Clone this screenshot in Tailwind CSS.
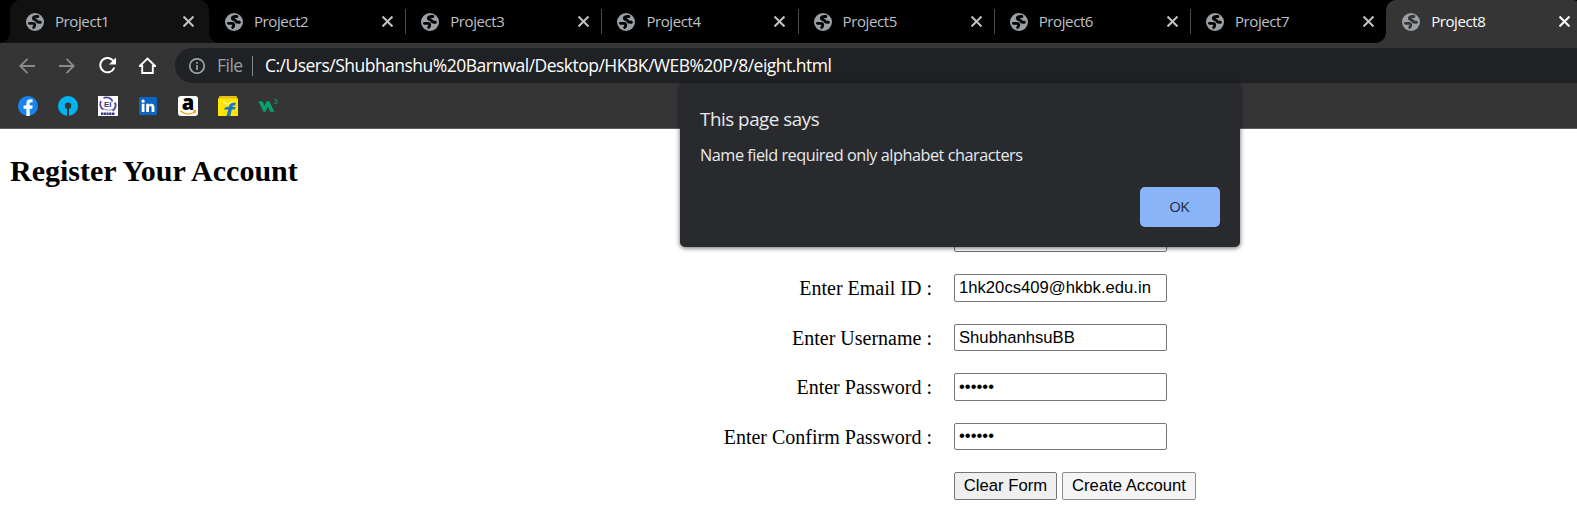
<!DOCTYPE html>
<html lang="en">
<head>
<meta charset="utf-8">
<title>Project8</title>
<script src="https://cdn.jsdelivr.net/npm/@tailwindcss/browser@4"></script>
</head>
<body class="h-[512px] w-[1577px] overflow-hidden bg-white">
<svg class="hidden">
  <symbol id="globe" viewBox="0 0 18 18">
    <circle cx="9" cy="9" r="9" fill="#9ba0a5"/>
    <g fill="none" stroke="var(--tab)" stroke-linecap="round" stroke-linejoin="round">
      <path stroke-width="3" d="M11.800 3.600C9 3.200 7 4.300 7.400 5.600 7.900 7 10.600 6.300 10.900 8.300 11.500 9.500 13 9 14.300 9.200"/>
      <path stroke-width="2.800" d="M3.400 10.300H6.800C8.300 10.300 9 11.300 8.700 12.600 8.500 13.600 8 14 7.600 14.500"/>
    </g>
  </symbol>
  <symbol id="x" viewBox="0 0 10 10"><path d="M.5.5l9 9M9.500.5L.5 9.500" stroke="currentColor" stroke-width="1.900" fill="none"/></symbol>
</svg>
<div class="relative flex h-[512px] flex-col">
  <header class="h-[129px] shrink-0 border-b border-[#5e5e5e] bg-[#353535] font-['Open_Sans',sans-serif]">
    <nav id="tabs" class="flex h-[43px] overflow-hidden bg-black pl-[10px] text-[15px] tracking-[-0.400px] text-[#bfc1c4]"></nav>
    <div class="flex h-10 items-end">
      <div class="flex h-[35px] w-[175px] shrink-0 items-center gap-6 pl-[19px] text-white">
        <svg class="size-4" viewBox="0 0 16 16" fill="none" stroke="#8b8b8b" stroke-width="1.800"><path d="M16 8H1.500M8.500 .8L1.300 8l7.200 7.200"/></svg>
        <svg class="size-4" viewBox="0 0 16 16" fill="none" stroke="#8b8b8b" stroke-width="1.800"><path d="M0 8h14.500M7.500 .8L14.700 8l-7.200 7.200"/></svg>
        <svg class="h-[17px] w-[17px]" viewBox="0 0 17 17" fill="none"><path d="M14.600 4.300A7.200 7.200 0 1 0 15.300 10.500" stroke="#fff" stroke-width="2"/><path d="M17 .5v7h-7z" fill="#fff"/></svg>
        <svg class="-ml-px h-[17px] w-[17px]" viewBox="0 0 17 17" fill="none" stroke="#fff" stroke-width="1.900"><path d="M.8 9L8.500 1.500 16.200 9H13.800v7H3.200V9z"/></svg>
      </div>
      <div class="flex h-[35px] flex-1 items-center rounded-l-full bg-[#202124] pl-[14px] text-[17.500px]">
        <svg class="size-4" viewBox="0 0 16 16" fill="none" stroke="#9aa0a6" stroke-width="1.700"><circle cx="8" cy="8" r="7.200"/><path d="M8 7v5M8 4v1.800"/></svg>
        <span class="ml-3 w-[27px] whitespace-nowrap tracking-[-0.500px] text-[#9aa0a6]">File</span>
        <span class="ml-2 h-5 w-px bg-[#85888c]"></span>
        <span class="ml-3 whitespace-nowrap tracking-[-0.520px] text-white">C:/Users/Shubhanshu%20Barnwal/Desktop/HKBK/WEB%20P/8/eight.html</span>
      </div>
    </div>
    <div class="flex h-[45px] items-center gap-5 pl-[18px]">
      <svg class="size-5" viewBox="0 0 20 20"><circle cx="10" cy="10" r="10" fill="#1686ed"/><path fill="#fff" d="M8.400 20v-7.200H5.600V9.600h2.800V7.600c0-2.900 1.500-4.400 4.100-4.400l2.100.2v2.800h-1.200c-1.200 0-1.700.7-1.700 1.500v1.900h3l-.5 3.200h-2.500V20z"/></svg>
      <svg class="size-5" viewBox="0 0 20 20"><circle cx="10" cy="10" r="10" fill="#00b5ef"/><circle cx="10" cy="9.800" r="3.200" fill="#353535"/><path d="M9 10h2v10H9z" fill="#353535"/></svg>
      <svg class="size-5" viewBox="0 0 20 20"><path fill="#fff" d="M0 0h20v20H0z"/><g fill="none" stroke="#4b4aa0" stroke-width="1.800"><path d="M5.500 1.900C10 .5 13.500 2.500 14.500 5.500M16.800 6.500c1.700 3.500.2 6.500-2.300 8.200M3 5C1.500 8.500 2.500 12 5.500 13.500"/></g><path d="M6 13c3 1.500 6 1.500 9 .2" stroke="#8b8ac6" fill="none"/><path d="M3 17.700h14" stroke="#37358f" stroke-width="2.600" stroke-dasharray="2.200 .5"/><text x="6" y="11" font-family="Liberation Sans" font-weight="700" font-size="8" fill="#37358f">EI</text></svg>
      <svg class="size-5" viewBox="0 0 20 20"><rect x="1" y="1" width="18" height="18" rx="1.500" fill="#0a66c2"/><g fill="#fff"><circle cx="5.100" cy="5.200" r="1.600"/><path d="M3.700 7.800h2.800V16H3.700zM8.200 7.800h2.700V9c1.300-2.200 5.500-1.900 5.500 2.200V16h-2.800v-4.300c0-2.200-2.600-2-2.600 0V16H8.200z"/></g></svg>
      <svg class="size-5 overflow-visible" viewBox="0 0 20 20"><rect width="20" height="20" rx="3" fill="#fff"/><text x="3.800" y="13.500" font-family="Open Sans" font-weight="800" font-size="21" fill="#000" textLength="12.500" lengthAdjust="spacingAndGlyphs">a</text><path d="M2.500 15c4.500 3.500 10 3.700 14.300 1M15 14.900l2.500-.1-.6 2.400" fill="none" stroke="#f90" stroke-width="1.200"/></svg>
      <svg class="size-5" viewBox="0 0 20 20"><path fill="#e9bd17" d="M1.500 0h17L20 4H0z"/><path fill="#ffe500" d="M0 2.500h20V20H0z"/><path d="M5.500 5c1.200 4 7.500 4 9 0" stroke="#fff6a0" stroke-width="1.200" fill="none"/><path fill="#1f74c8" d="M17.800 7c-4.600-.8-6.500 1-7 4H8L5.500 13.400h4.700L8.500 20h3.800l1.500-6.600h3l.9-2.400h-3.300c.3-1.600 1.300-1.700 2.800-1.500z"/></svg>
      <svg class="size-5" viewBox="0 0 20 20"><path d="M.3 5.200h4.200l2.300 4.600L8.600 5.200h2.600l5.200 10.500h-4.200L9.800 10.500 7.600 15.700H5.500z" fill="#0aa06e"/><text x="15.600" y="8" font-family="Liberation Sans" font-size="8" fill="#0aa06e">3</text></svg>
    </div>
  </header>
  <main class="flex-1 bg-white font-['Liberation_Serif',serif] text-black">
    <h1 class="h-[85px] pt-[25px] pl-[10px] text-[30px] leading-[34px] font-bold">Register Your Account</h1>
    <form class="grid auto-rows-[49.500px] grid-cols-[932px_1fr] items-center gap-x-[22px] text-[20px]">
      <label class="text-right">Enter Name :</label><input class="mb-0.5 h-7 w-[213px] rounded-[2px] border border-[#767676] px-1 font-['Liberation_Sans',sans-serif] text-[16.670px]" value="">
      <label class="pb-px text-right">Enter Email ID :</label><input class="h-7 w-[213px] rounded-[2px] border border-[#767676] px-1 font-['Liberation_Sans',sans-serif] text-[16.670px]" value="1hk20cs409@hkbk.edu.in">
      <label class="text-right">Enter Username :</label><input class="h-[27px] w-[213px] rounded-[2px] border border-[#767676] px-1 font-['Liberation_Sans',sans-serif] text-[16.670px]" value="ShubhanhsuBB">
      <label class="text-right">Enter Password :</label><input type="password" class="h-7 w-[213px] rounded-[2px] border border-[#767676] px-1 pb-px font-['Liberation_Sans',sans-serif] text-[16.670px]" value="abcdef">
      <label class="text-right">Enter Confirm Password :</label><input type="password" class="h-[27px] w-[213px] rounded-[2px] border border-[#767676] px-1 pb-px font-['Liberation_Sans',sans-serif] text-[16.670px]" value="abcdef">
      <span></span>
      <div class="flex gap-[5px] font-['Liberation_Sans',sans-serif] text-[16.670px]">
        <button type="button" class="h-7 w-[103px] rounded-[2px] border border-[#767676] bg-[#efefef] pt-px leading-none">Clear Form</button>
        <button type="button" class="h-7 w-[134px] rounded-[2px] border border-[#8c8c8c] bg-[#f5f5f5] pt-px leading-none">Create Account</button>
      </div>
    </form>
  </main>
  <div role="dialog" class="absolute top-[83px] left-[680px] flex h-[164px] w-[560px] flex-col rounded-[5px] bg-[#292a2d] px-5 pt-[23px] pb-5 font-['Open_Sans',sans-serif] text-[#e8eaed] shadow-[0_1px_5px_rgba(0,0,0,0.6)]">
    <h2 class="text-[18.750px] leading-[26px] tracking-[-0.450px]">This page says</h2>
    <p class="mt-[11px] text-[16.250px] leading-[24px] tracking-[-0.470px]">Name field required only alphabet characters</p>
    <button type="button" class="mt-auto ml-auto h-10 w-20 rounded-[5px] bg-[#8ab4f8] pr-0.5 pb-0.5 text-[15px] font-medium tracking-[-0.700px] text-[#202b3c]">OK</button>
  </div>
</div>
<script>
const tabs = document.getElementById('tabs');
for (let i = 1; i <= 8; i++) {
  const t = document.createElement('div');
  let c = 'relative flex shrink-0 items-center pl-4 w-[196.200px] ';
  let color = '#000';
  if (i === 1) { c += 'rounded-t-[10px] bg-[#111111]'; color = '#111'; }
  else if (i === 8) { c += 'rounded-t-[10px] bg-[#353535] text-white'; color = '#353535'; }
  t.className = c;
  if (i === 1) t.style.width = '199px';
  t.style.setProperty('--tab', color);
  const curve = 'h-[10px] w-[10px] absolute bottom-0 ';
  t.innerHTML =
    (i === 1 ? `<i class="${curve} -left-[10px] bg-[radial-gradient(circle_at_0_0,#000_9.5px,#111111_10px)]"></i><i class="${curve} -right-[10px] bg-[radial-gradient(circle_at_100%_0,#000_9.5px,#111111_10px)]"></i>` : '') +
    (i === 8 ? `<i class="${curve} -left-[10px] bg-[radial-gradient(circle_at_0_0,#000_9.5px,#353535_10px)]"></i>` : '') +
    `<svg class="size-[18px]"><use href="#globe"/></svg><span class="-mt-px ml-[11px] w-[128px]">Project${i}</span><svg class="size-[11px]" viewBox="0 0 10 10"><use href="#x"/></svg>` +
    (i > 1 && i < 7 ? '<i class="absolute -right-px top-[9px] h-[25px] w-px bg-[#4a4b4d]"></i>' : '');
  tabs.append(t);
}
</script>
</body>
</html>
